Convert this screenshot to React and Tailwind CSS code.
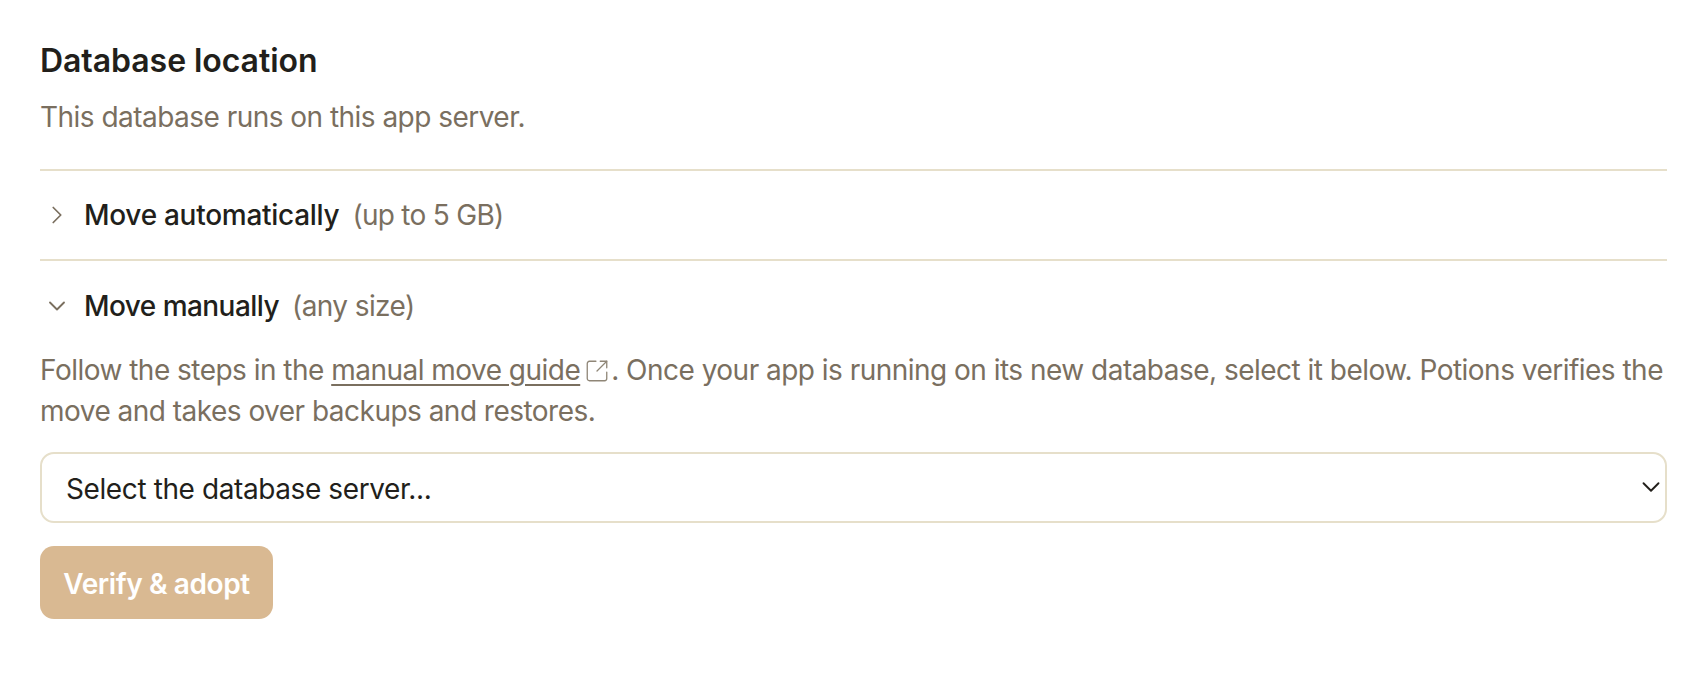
import { useState } from "react";
import { ChevronDown, ChevronRight, SquareArrowOutUpRight } from "lucide-react";

const font = "font-['Inter','Noto_Sans',sans-serif]";

export default function App() {
  const [server, setServer] = useState("");

  return (
    <div className={`${font} min-h-screen bg-white pl-[40px] pr-[41px] pt-[39px] text-[#221f1b]`}>
      <h2 className="text-[32px] leading-[44px] font-semibold tracking-[-0.06px]">Database location</h2>
      <p className="mt-[14px] text-[28px] leading-[40px] tracking-[-0.53px] text-[#7a6f5f]">This database runs on this app server.</p>

      <div className="mt-[32px] border-t-2 border-[#e6dfca]">
        {/* Move automatically */}
        <div className="flex h-[88px] items-center">
          <ChevronRight className="ml-[2px] mr-[12px] h-[30px] w-[30px] text-[#7a6f5f]" strokeWidth={1.4} />
          <span className="text-[28px] font-medium tracking-[-0.28px]">Move automatically</span>
          <span className="ml-[13px] text-[28px] tracking-[-0.7px] text-[#7a6f5f]">(up to 5 GB)</span>
        </div>
      </div>

      <div className="border-t-2 border-[#e6dfca]">
        {/* Move manually */}
        <div className="flex h-[89px] items-center">
          <ChevronDown className="ml-[3px] mr-[13px] h-[28px] w-[28px] text-[#7a6f5f]" strokeWidth={1.6} />
          <span className="text-[28px] font-medium tracking-[-0.55px]">Move manually</span>
          <span className="ml-[13px] text-[28px] tracking-[-0.6px] text-[#7a6f5f]">(any size)</span>
        </div>

        <p className="text-[28px] leading-[41px] tracking-[-0.52px] text-[#7a6f5f]">
          Follow the steps in the <a href="#" className="underline underline-offset-4">manual move guide</a>
          <SquareArrowOutUpRight className="ml-[4px] mr-[1px] inline h-[26px] w-[26px] align-[-4px] text-[#8f8677]" strokeWidth={1.2} />
          . Once your app is running on its new database, select it below. Potions verifies the move and takes over backups and restores.
        </p>

        <div className="relative mt-[20px]">
          <select
            value={server}
            onChange={(e) => setServer(e.target.value)}
            className="h-[71px] w-full appearance-none rounded-[14px] border-2 border-[#e6dfca] bg-white pl-[24px] pt-[2px] text-[28px] tracking-[-0.4px] text-[#221f1b]"
          >
            <option value="">Select the database server...</option>
          </select>
          <ChevronDown className="pointer-events-none absolute right-[1px] top-[20px] h-[30px] w-[30px] text-[#221f1b]" strokeWidth={1.5} />
        </div>

        <button className="mt-[23px] h-[73px] w-[233px] rounded-[14px] bg-[#d9b992] pt-[2px] text-[28px] font-semibold tracking-[-0.4px] text-white">
          Verify &amp; adopt
        </button>
      </div>
    </div>
  );
}
